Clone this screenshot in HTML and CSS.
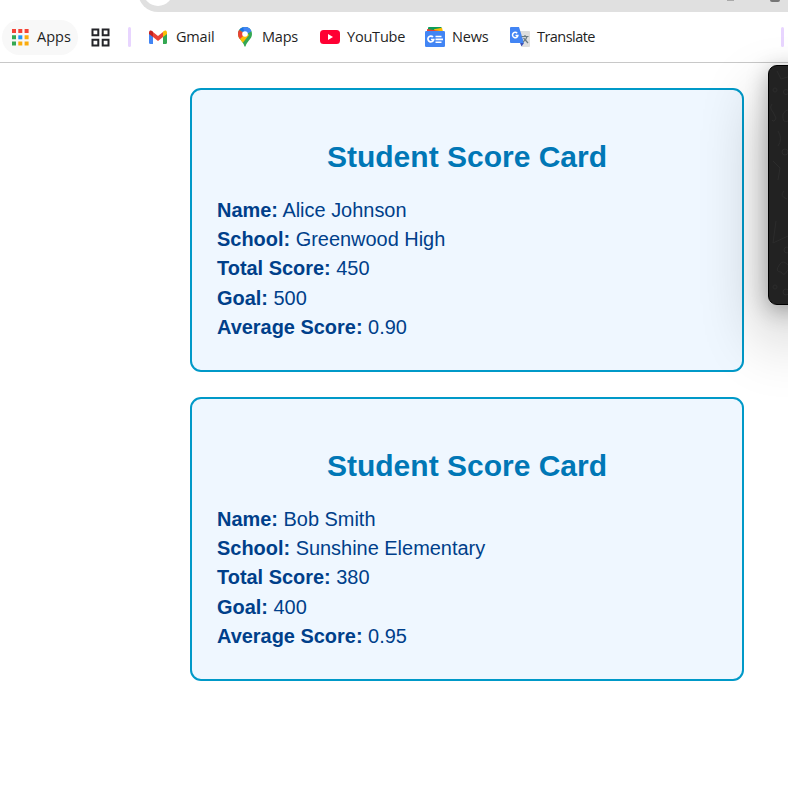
FILE: index.html
```
<!DOCTYPE html>
<html lang="en">
<head>
<meta charset="utf-8">
<title>Student Score Card</title>
<link rel="stylesheet" href="styles.css">
</head>
<body>
<header class="toolbar">
  <div class="address-row">
    <div class="address-bar"><i class="site-button"></i></div>
    <i class="hint"></i><i class="hint hint-dark"></i>
  </div>
  <nav class="bookmarks">
    <a class="apps">
      <svg width="17" height="17" viewBox="0 0 17 17"><g fill="#f44336"><path d="M0 0h4v4H0zM6.300 0h4v4h-4zM12.600 0h4v4h-4z"/></g><path fill="#34a853" d="M0 6.300h4v4H0zM0 12.600h4v4H0z"/><path fill="#2196f3" d="M6.300 6.300h4v4h-4z"/><path fill="#fbab0c" d="M12.600 6.300h4v4h-4zM6.300 12.600h4v4h-4zM12.600 12.600h4v4h-4z"/></svg>
      <span>Apps</span>
    </a>
    <svg class="groups" width="19" height="19" viewBox="0 0 19 19" fill="none" stroke="#242529" stroke-width="2"><path d="M1.500 1.500h5.800v5.800H1.500zM11.700 1.500h5.800v5.800h-5.800zM1.500 11.700h5.800v5.800H1.500zM11.700 11.700h5.800v5.800h-5.800z"/></svg>
    <i class="divider"></i>
    <a class="bookmark gmail">
      <svg width="20" height="20" viewBox="0 0 20 20"><path fill="#4285f4" d="M1 6l4 3v8H2.400Q1 17 1 15.700z"/><path fill="#34a853" d="M15 9l4-3v9.700q0 1.300-1.400 1.300H15z"/><path fill="#ea4335" d="M5 5l5 4 5-4v5l-5 4-5-4z"/><path fill="#c5221f" d="M1 5.500C1 3.400 3 3 4.200 4L5 4.700V10L1 7z"/><path fill="#fbbc04" d="M19 5.500C19 3.400 17 3 15.800 4l-.8.700V10l4-3z"/></svg>
      <span>Gmail</span>
    </a>
    <a class="bookmark maps">
      <svg width="20" height="20" viewBox="0 0 20 20"><defs><clipPath id="pin"><path d="M10 0C5.800 0 3 3 3 7c0 3 1.500 4.500 3.500 7C8.500 16.500 9 17.500 9.300 19q.7 1.500 1.400 0c.3-1.500.8-2.500 2.800-5C15.500 11.500 17 10 17 7c0-4-2.800-7-7-7z"/></clipPath></defs><g clip-path="url(#pin)"><path fill="#34a853" d="M0 0h20v20H0z"/><path fill="#fbbc04" d="M0 13L8 3l6 5-8 10z"/><path fill="#ea4335" d="M0 0l10 7-6 6-4-2z"/><path fill="#1a73e8" d="M4 2l6 5 7-7H4z"/><path fill="#4285f4" d="M8 0h9v4l-7 4z"/></g><circle cx="10" cy="7" r="2.800" fill="#fff"/></svg>
      <span>Maps</span>
    </a>
    <a class="bookmark youtube">
      <svg width="20" height="20" viewBox="0 0 20 20"><rect y="3" width="20" height="14" rx="3.500" fill="#ff0033"/><path fill="#fff" d="M8 7l5 3-5 3z"/></svg>
      <span>YouTube</span>
    </a>
    <a class="bookmark news">
      <svg width="20" height="20" viewBox="0 0 20 20"><path fill="#0c9d58" d="M3 1q0-1 1-1h12l1 1v4H3z"/><path fill="#fbbc04" d="M9 2.200l8-1.500 1 4-8 2z"/><path fill="#ea4335" d="M2 2l13 2v2H2z"/><rect y="4" width="20" height="16" rx="1.300" fill="#4285f4"/><g fill="none" stroke="#fff"><path stroke-width="1.700" d="M8 10a2.900 2.900 0 1 0 .7 2.500H6"/><path stroke-width="1.600" d="M10.500 9.500h6M10.500 12.400h7.500M10.500 15.300h6"/></g></svg>
      <span>News</span>
    </a>
    <a class="bookmark translate">
      <svg width="20" height="20" viewBox="0 0 20 20"><path fill="#dedede" d="M7 4h12q1 0 1 1v14q0 1-1 1h-7z"/><path fill="#3b50b5" d="M10 16h4l-2.500 3.500z"/><path fill="#4285f4" d="M1 0h8l5 16H1q-1 0-1-1V1q0-1 1-1z"/><path fill="none" stroke="#fff" stroke-width="1.500" d="M7.200 6.200a2.700 2.700 0 1 0 .7 2.200H5.500"/><path fill="none" stroke="#6b7b83" stroke-width="1.200" d="M11.500 9.500h7M15 8v1.500M17 9.500q-1 4-4 5.500M13.500 11l4.500 5"/></svg>
      <span>Translate</span>
    </a>
    <i class="divider divider-end"></i>
  </nav>
</header>
<main class="cards">
  <section class="card">
    <h2>Student Score Card</h2>
    <p><b>Name:</b> Alice Johnson</p>
    <p><b>School:</b> Greenwood High</p>
    <p><b>Total Score:</b> 450</p>
    <p><b>Goal:</b> 500</p>
    <p><b>Average Score:</b> 0.90</p>
  </section>
  <section class="card">
    <h2>Student Score Card</h2>
    <p><b>Name:</b> Bob Smith</p>
    <p><b>School:</b> Sunshine Elementary</p>
    <p><b>Total Score:</b> 380</p>
    <p><b>Goal:</b> 400</p>
    <p><b>Average Score:</b> 0.95</p>
  </section>
</main>
<aside class="overlay">
  <svg width="40" height="240" viewBox="0 0 40 240" fill="none" stroke="#2c2c2c"><path d="M8 5l4 8 10-3M3 38q-3 4 1 8l3 6q-2 5-4 2M14 48q5-8 9 0l-4 7q-6 3-5-7M9 65q5 8 0 15M4 95l7 7-2 12M15 125q-5 5 3 8M7 155l-3 22 15-7M11 198q-6 8 1 8 3 5 6-1 5-4 0-7-4-4-7 0"/><circle cx="6" cy="24" r="2"/><circle cx="17" cy="26" r="2.500"/><circle cx="16" cy="86" r="3"/><circle cx="18" cy="184" r="3"/><circle cx="6" cy="221" r="2"/><circle cx="17" cy="226" r="3"/></svg>
</aside>
</body>
</html>
```
FILE: styles.css
```
* { box-sizing: border-box; }
body {
  margin: 0;
  height: 785px;
  overflow: hidden;
  position: relative;
  background: #fff;
  font-family: "Liberation Sans", Arial, sans-serif;
}
.toolbar { height: 63px; border-bottom: 1px solid #c8c8c8; }
.address-row {
  height: 12px;
  overflow: hidden;
  display: flex;
  align-items: flex-start;
  padding-left: 138px;
  position: relative;
}
.address-bar {
  flex: none;
  width: 700px;
  height: 40px;
  margin-top: -28px;
  border-radius: 20px;
  background: #e0e0e0;
}
.site-button {
  display: block;
  width: 30px;
  height: 30px;
  margin: 4px 0 0 5px;
  border-radius: 50%;
  background: #fff;
}
.hint { position: absolute; left: 727px; top: 0; width: 7px; height: 1px; background: #aaa; }
.hint-dark { left: 770px; width: 10px; height: 2px; background: #777; border-radius: 0 0 2px 2px; }
.bookmarks {
  height: 50px;
  display: flex;
  align-items: center;
  font: 14.5px/20px "Open Sans", "Noto Sans", sans-serif;
  letter-spacing: -0.2px;
  color: #1f1f1f;
}
.bookmarks svg { flex: none; display: block; }
.apps {
  display: flex;
  align-items: center;
  gap: 8px;
  width: 76px;
  height: 35px;
  margin-left: 2px;
  padding-left: 10px;
  border-radius: 18px;
  background: #f8f8f8;
}
.groups { margin-left: 13px; }
.divider { width: 3px; height: 20px; margin-left: 18px; border-radius: 2px; background: #e8d5ff; }
.divider-end { margin-left: auto; margin-right: 4px; }
.bookmark { display: flex; align-items: center; gap: 7px; flex: none; }
.bookmark span, .apps span { white-space: nowrap; }
.apps span { letter-spacing: 0; }
.gmail { width: 87px; margin-left: 17px; gap: 8px; }
.maps { width: 85px; }
.youtube { width: 105px; }
.news { width: 85px; }
.translate { letter-spacing: -0.55px; }
.cards {
  width: 554px;
  margin: 25px 0 0 190px;
  display: grid;
  gap: 25px;
}
.card {
  height: 284px;
  padding: 49px 25px 0;
  border: 2px solid #0099c8;
  border-radius: 11px;
  background: #eff7ff;
  color: #003f8a;
  font-size: 19.95px;
  line-height: 29.3px;
}
.card h2 {
  margin: 0 0 20.7px;
  text-align: center;
  font-size: 30px;
  line-height: 36px;
  color: #0077b6;
}
.card p { margin: 0; }
.overlay {
  position: absolute;
  left: 768px;
  top: 65px;
  width: 40px;
  height: 240px;
  overflow: visible;
  border: 1px solid #000;
  border-radius: 9px;
  background: #222;
  box-shadow: 0 32px 65px rgba(0, 0, 0, .32), 0 5px 22px rgba(0, 0, 0, .3);
}
```
